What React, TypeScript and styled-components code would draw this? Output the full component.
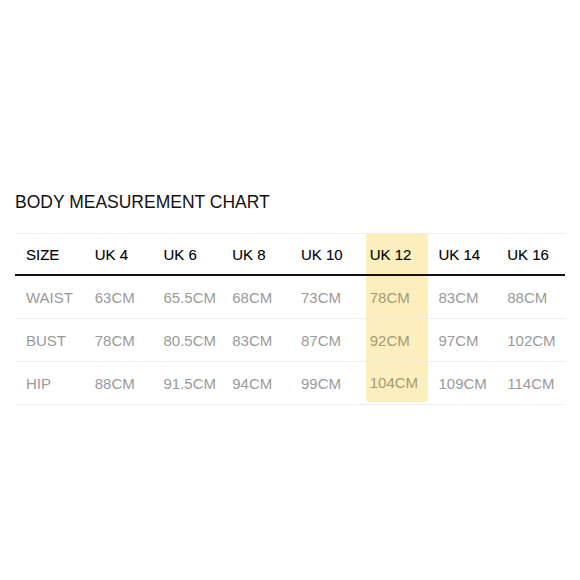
import React from 'react';
import styled, { createGlobalStyle } from 'styled-components';

const GlobalStyle = createGlobalStyle`
  body {
    margin: 0;
    background: #fff;
    font-family: "Liberation Sans", Arial, sans-serif;
  }
`;

const Page = styled.div`
  width: 580px;
  height: 580px;
  box-sizing: border-box;
  padding: 191px 15px 0;
`;

const Title = styled.h2`
  margin: 0 0 20px;
  font-size: 17.5px;
  line-height: 22px;
  font-weight: 400;
  color: #111;
`;

const Table = styled.div`
  width: 550px;
  border-top: 1px solid #ececec;
`;

const Row = styled.div<{ $head?: boolean }>`
  display: grid;
  grid-template-columns: repeat(8, 1fr);
  height: ${(p) => (p.$head ? '40px' : '42px')};
  border-bottom: ${(p) => (p.$head ? '2px solid #111' : '1px solid #ececec')};
`;

const Cell = styled.div<{ $head?: boolean; $hl?: boolean; $last?: boolean }>`
  display: flex;
  align-items: center;
  padding-left: ${(p) => (p.$hl ? '4px' : '11px')};
  margin-left: ${(p) => (p.$hl ? '7px' : '0')};
  margin-bottom: ${(p) => (p.$hl && p.$last ? '2px' : '0')};
  border-radius: ${(p) => (p.$hl && p.$last ? '0 0 3px 3px' : '0')};
  background: ${(p) => (p.$hl ? '#fdefbd' : 'transparent')};
  font-size: 15px;
  white-space: nowrap;
  color: ${(p) => (p.$head ? '#000' : p.$hl ? '#a19a7c' : '#9a9a9a')};
  -webkit-text-stroke: ${(p) => (p.$head ? '0.1px #000' : '0')};
`;

const sizes = ['SIZE', 'UK 4', 'UK 6', 'UK 8', 'UK 10', 'UK 12', 'UK 14', 'UK 16'];

const rows = [
  ['WAIST', '63CM', '65.5CM', '68CM', '73CM', '78CM', '83CM', '88CM'],
  ['BUST', '78CM', '80.5CM', '83CM', '87CM', '92CM', '97CM', '102CM'],
  ['HIP', '88CM', '91.5CM', '94CM', '99CM', '104CM', '109CM', '114CM'],
];

const HIGHLIGHT = 5;

export default function App() {
  return (
    <>
      <GlobalStyle />
      <Page>
        <Title>BODY MEASUREMENT CHART</Title>
        <Table>
          <Row $head>
            {sizes.map((s, i) => (
              <Cell key={s} $head $hl={i === HIGHLIGHT}>
                {s}
              </Cell>
            ))}
          </Row>
          {rows.map((r, ri) => (
            <Row key={r[0]}>
              {r.map((v, i) => (
                <Cell key={i} $hl={i === HIGHLIGHT} $last={ri === rows.length - 1}>
                  {v}
                </Cell>
              ))}
            </Row>
          ))}
        </Table>
      </Page>
    </>
  );
}
